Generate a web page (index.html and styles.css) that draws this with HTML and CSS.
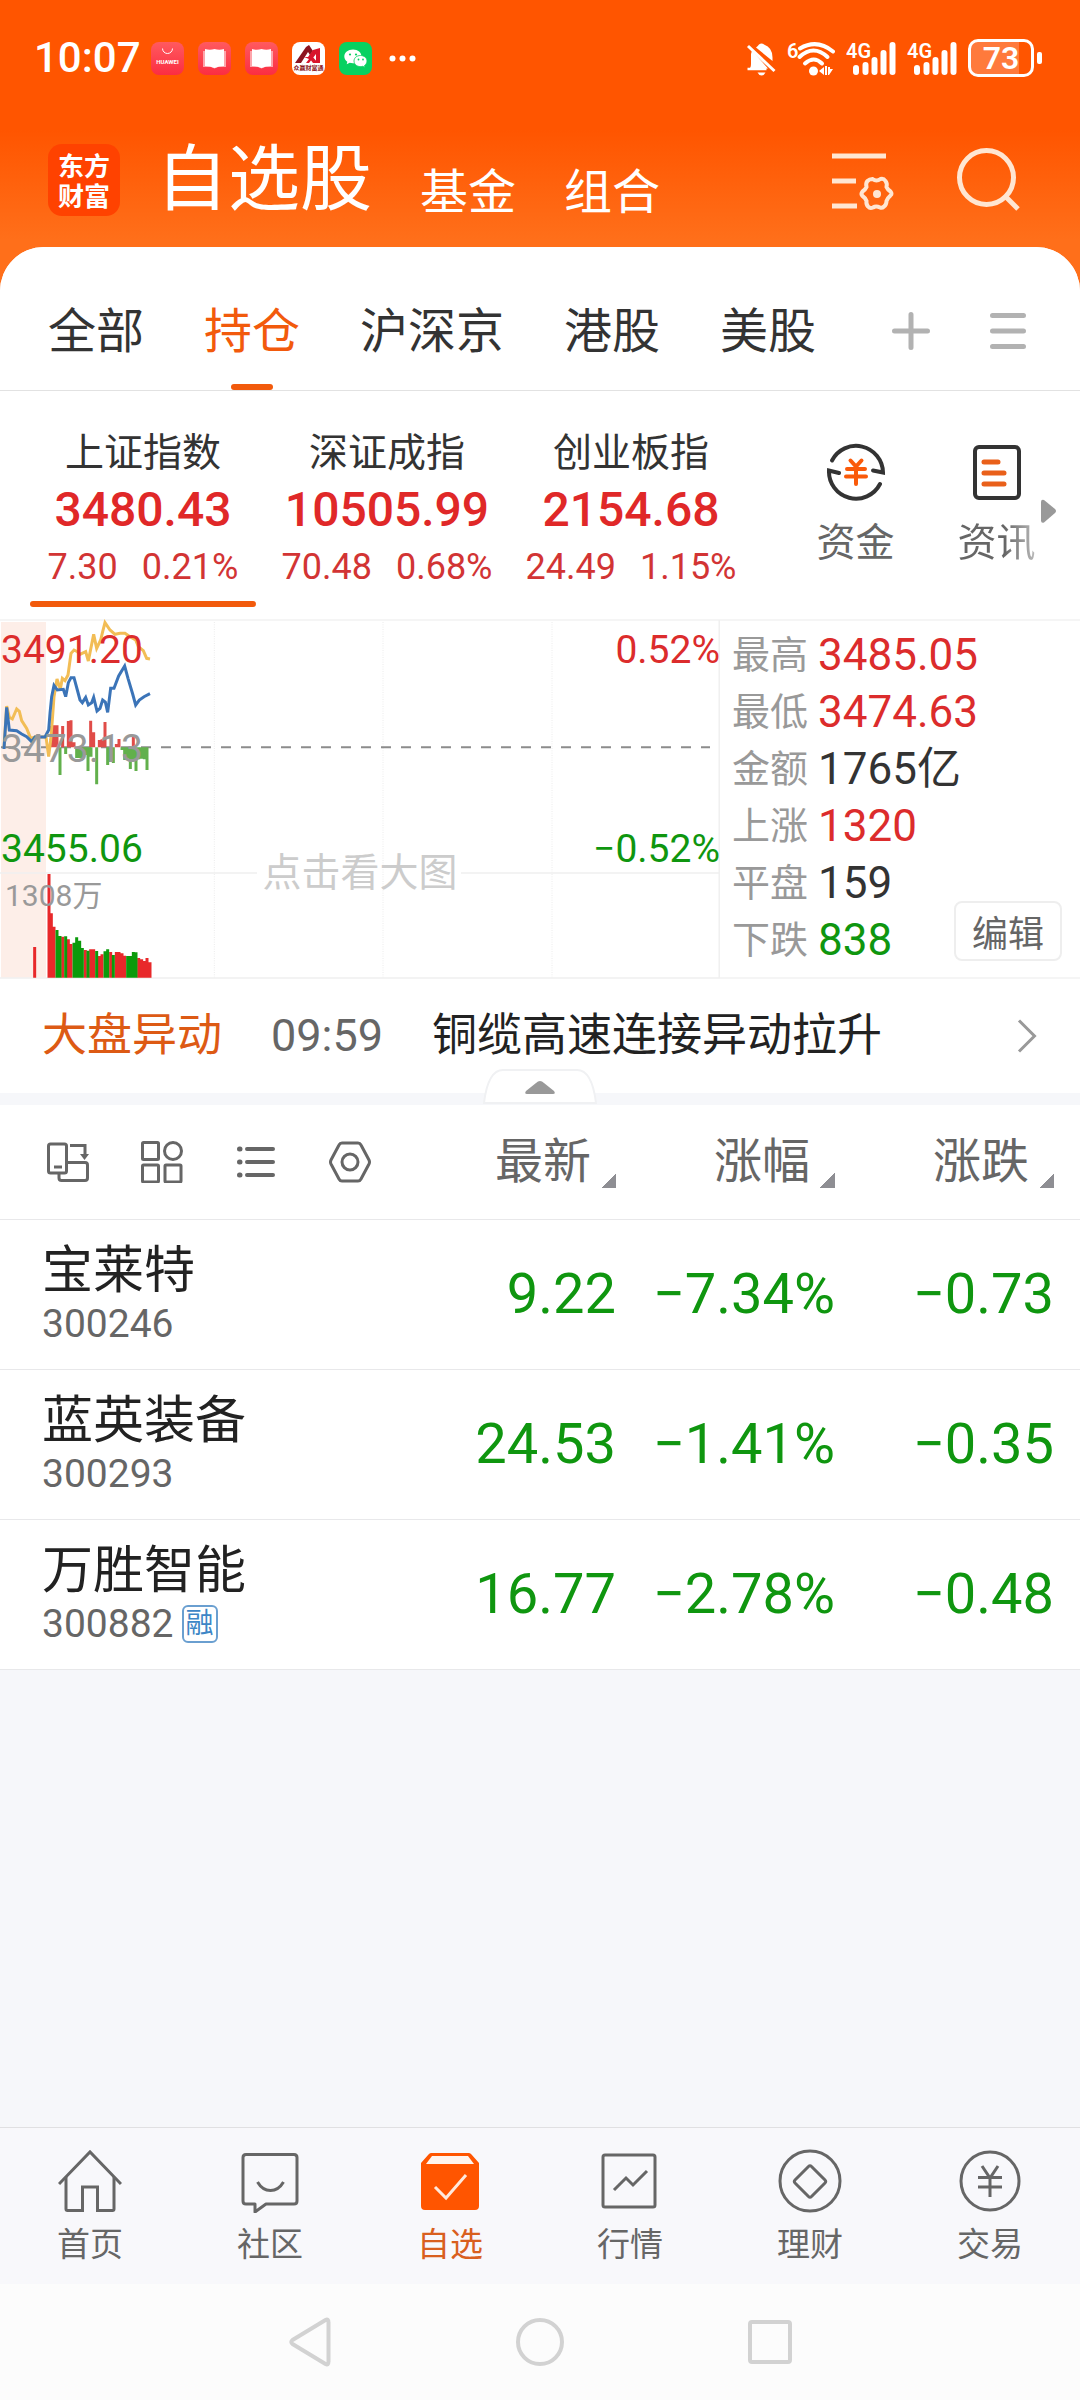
FILE: index.html
```html
<!DOCTYPE html>
<html lang="zh-CN">
<head>
<meta charset="utf-8">
<meta name="viewport" content="width=device-width, initial-scale=1">
<title>自选股</title>
<link rel="stylesheet" href="styles.css">
</head>
<body>
<div class="app">
  <div class="status">
    <span class="clock">10:07</span>
    <div class="notices">
      <svg class="notice" viewBox="0 0 33 33"><defs><linearGradient id="rd" x2="0" y2="1"><stop offset="0" stop-color="#ff5a5f"/><stop offset="1" stop-color="#fb2d42"/></linearGradient></defs><rect width="33" height="33" rx="8" fill="url(#rd)"/><path d="M11.500 6.500a5 5 0 0 0 10 0" fill="none" stroke="#fff" stroke-width="1"/><text x="16.500" y="21.500" class="huawei">HUAWEI</text></svg>
      <svg class="notice" viewBox="0 0 33 33"><rect width="33" height="33" rx="8" fill="url(#rd)"/><path d="M5 9h23v16H20l-3.500 1.500L13 25H5z" fill="#fda5ab"/><path d="M7 7q5 1.500 9.500 0 5 1.500 9.500 0v17q-5 0-9.500 2-4.500-2-9.500-2z" fill="#fff"/></svg>
      <svg class="notice" viewBox="0 0 33 33"><rect width="33" height="33" rx="8" fill="url(#rd)"/><path d="M5 9h23v16H20l-3.500 1.500L13 25H5z" fill="#fda5ab"/><path d="M7 7q5 1.500 9.500 0 5 1.500 9.500 0v17q-5 0-9.500 2-4.500-2-9.500-2z" fill="#fff"/></svg>
      <svg class="notice" viewBox="0 0 33 33"><rect width="33" height="33" rx="8" fill="#fff"/><path d="M3 21L14 5l3-2 4 6-3 4-2-3-7 11z" fill="#8c1420"/><path d="M12 15h4l5-7 7-2v15h-4v-9l-7 9h-3l3-4zM20 14l6 7h-5l-3-4z" fill="#d8142c"/><text x="16.500" y="28" class="broker">众赢财富通</text></svg>
      <svg class="notice" viewBox="0 0 33 33"><rect width="33" height="33" rx="8" fill="#07d160"/><path d="M14 7.500c-5 0-8.700 3-8.700 7 0 2.300 1.200 4 3 5.300l-.6 2.500 3-1.500c1 .3 2 .5 3.300.5 5 0 8.500-3 8.500-6.800s-3.500-7-8.500-7z" fill="#fff"/><path d="M21.500 13.500c-3.700 0-6.500 2.300-6.500 5.500s2.800 5.600 6.500 5.600c.8 0 1.600 0 2.300-.3l2.200 1.200-.5-2c1.500-1 2.500-2.700 2.500-4.500 0-3.200-2.900-5.500-6.500-5.500z" fill="#fff" stroke="#07d160" stroke-width=".8"/><circle cx="11" cy="12.500" r="1.100" fill="#07d160"/><circle cx="17" cy="12.500" r="1.100" fill="#07d160"/><circle cx="19.500" cy="17.500" r=".9" fill="#07d160"/><circle cx="24" cy="17.500" r=".9" fill="#07d160"/></svg>
    </div>
    <svg class="more" viewBox="0 0 27 7" fill="#fff"><circle cx="3.500" cy="3.500" r="3"/><circle cx="13.500" cy="3.500" r="3"/><circle cx="23.500" cy="3.500" r="3"/></svg>
    <div class="signals">
      <svg width="30" height="36" viewBox="0 0 30 36"><path d="M3.500 28.500q1.500-1 1.500-5V14l1-3.500L22 28.500z" fill="#fff"/><path d="M10 7.500q2-1.500 3-3 2.500-2 5 0 8.500 3 8.500 13V21z" fill="#fff"/><path d="M2 6l26.500 25" stroke="#fff" stroke-width="3"/><path d="M1.500 29h19" stroke="#fff" stroke-width="2.500"/><path d="M11.500 32.500h8q-1.500 3-4 3t-4-3z" fill="#fff"/></svg>
      <svg width="48" height="38" viewBox="0 0 48 38"><g fill="none" stroke="#fff" stroke-width="4" stroke-linecap="round"><path d="M13 9.500q17-10 33 3"/><path d="M12.500 18q14-13 28 0"/><path d="M18 24.500q9-8 17 0"/></g><circle cx="26.500" cy="32" r="4.500" fill="#fff"/><path d="M32 32l5-4v8zM41 28h2v2h3l-4 6h-1zM38 27h2v9h-2z" fill="#fff"/><text x="0" y="19" class="sig-text">6</text></svg>
      <svg width="50" height="38" viewBox="0 0 50 38"><g stroke="#fff" stroke-width="6" stroke-linecap="round"><path d="M10 29v4M19.500 26v7M28.500 21v12M37.500 14v19M46.500 6v27"/></g><text x="0" y="19" class="sig-text">4G</text></svg>
      <svg width="50" height="38" viewBox="0 0 50 38"><g stroke="#fff" stroke-width="6" stroke-linecap="round"><path d="M10 29v4M19.500 26v7M28.500 21v12M37.500 14v19M46.500 6v27"/></g><text x="0" y="19" class="sig-text">4G</text></svg>
      <div class="battery"><span>73</span></div>
    </div>
  </div>

  <header class="header">
    <div class="logo"><span>东方</span><span>财富</span></div>
    <nav class="sections">
      <h1 class="section-title">自选股</h1>
      <a class="section" href="#">基金</a>
      <a class="section" href="#">组合</a>
    </nav>
    <div class="header-tools">
      <button class="icon-btn" aria-label="设置"><svg width="64" height="64" viewBox="0 0 64 64" fill="none" stroke="#ffe6d2" stroke-width="5"><path d="M1 8h54M1 33h24M1 58h25"/><path d="M41.500 31q4 3 8 0 3-1 5 2 2 2.500 1 6 1 2.500 4 4.500 2 2.500 0 4-3.500 3-4 5.500 0 4-2.500 5.500-2 2-4 1-4-2-7 0-3 1.500-5-1-2-2-1.500-5.500-1-3-4-5-2-2 0-4.500 3-2 4-4.500-1-4 1-6t5-2z" stroke-width="4"/><circle cx="46" cy="46" r="4" fill="#ffe6d2" stroke="none"/></svg></button>
      <button class="icon-btn" aria-label="搜索"><svg width="64" height="64" viewBox="0 0 64 64" fill="none" stroke="#ffe6d2"><circle cx="29.500" cy="29.500" r="27" stroke-width="5"/><path d="M48 48l13 13" stroke-width="5"/></svg></button>
    </div>
  </header>

  <main class="sheet">
    <nav class="tabs">
      <button class="tab">全部</button>
      <button class="tab tab-on">持仓</button>
      <button class="tab">沪深京</button>
      <button class="tab">港股</button>
      <button class="tab">美股</button>
      <div class="tab-tools">
        <button class="icon-btn" aria-label="添加"><svg width="38" height="38" viewBox="0 0 38 38" stroke="#b2b2b2" stroke-width="5" stroke-linecap="round"><path d="M19 2.500v33M2.500 19h33"/></svg></button>
        <button class="icon-btn" aria-label="菜单"><svg width="36" height="38" viewBox="0 0 36 38" stroke="#b2b2b2" stroke-width="5" stroke-linecap="round"><path d="M2.500 3.500h31M2.500 19h31M2.500 34.500h31"/></svg></button>
      </div>
    </nav>

    <section class="overview">
      <div class="indices">
        <button class="index index-on"><span class="index-name">上证指数</span><span class="index-value">3480.43</span><span class="index-change"><span>7.30</span><span>0.21%</span></span></button>
        <button class="index"><span class="index-name">深证成指</span><span class="index-value">10505.99</span><span class="index-change"><span>70.48</span><span>0.68%</span></span></button>
        <button class="index"><span class="index-name">创业板指</span><span class="index-value">2154.68</span><span class="index-change"><span>24.49</span><span>1.15%</span></span></button>
      </div>
      <div class="shortcuts">
        <button class="shortcut"><svg width="60" height="60" viewBox="0 0 60 60" fill="none" stroke-linecap="round"><g stroke="#333" stroke-width="4"><path d="M6 18.500A27 27 0 0 1 57 30.500L47 28.500"/><path d="M54 42A27 27 0 0 1 3 28.500L13 31"/></g><path d="M24.500 18.500l5.500 6 5.500-6M21 27h18M20 34.500h20M30 25v17" stroke="#fa5a0a" stroke-width="4"/></svg><span>资金</span></button>
        <button class="shortcut"><svg width="60" height="60" viewBox="0 0 60 60" fill="none"><rect x="8" y="5" width="44" height="51" rx="4" stroke="#333" stroke-width="4"/><path d="M17 20h14M17 31h20M17 42h20" stroke="#e9601a" stroke-width="5" stroke-linecap="round"/></svg><span class="fade">资讯</span></button>
        <svg class="scroll-hint" width="15" height="24" viewBox="0 0 15 24"><path d="M0 3q0-3 3-2l11 9q2 2 0 4L3 23.500q-3 1-3-2z" fill="#999"/></svg>
      </div>
    </section>

    <section class="market">
      <div class="chart">
        <svg class="plot" viewBox="0 57 2160 1080">
          <rect x="3" y="66" width="135" height="1067" fill="#fdeee8"/>
          <g stroke="#ececec" stroke-width="3" stroke-dasharray="3 4"><path d="M643 66V1133M1149 66V1133M1656 66V1133"/></g>
          <path d="M0 819H771M1383 819H2160M0 1134H2160M2158 60V1134" stroke="#f0f0f0" stroke-width="5" fill="none"/>
          <path d="M3 442H2130" stroke="#8c8c8c" stroke-width="6" stroke-dasharray="30 30"/>
          <g stroke-width="9" fill="none">
            <path stroke="#e04c48" d="M155 442V378M163 442V376M171 442V376M188 442V378M205 442V363M213 442V361M222 442V427M272 442V362M281 442V397M298 442V420M306 442V418M315 442V366M349 442V432M357 442V417M400 442V410"/>
            <path stroke="#62b04c" d="M180 442V525M197 442V462M230 442V474M239 442V474M247 442V480M256 442V465M264 442V513M273 442V470M290 442V553M323 442V495M332 442V486M340 442V489M366 442V450M374 442V480M383 442V476M391 442V507M400 442V484M408 442V513M416 442V478M425 442V476M433 442V478M441 442V510"/>
            <path stroke="#e8282a" d="M104 1133V1041M147 1133V822M154 1133V940M162 1133V980M188 1133V1010M205 1133V1018M213 1133V1032M256 1133V1050M272 1133V1048M281 1133V1048M298 1133V1068M306 1133V1063M332 1133V1056M349 1133V1056M357 1133V1056M366 1133V1060M374 1133V1067M416 1133V1074M425 1133V1078M433 1133V1083M441 1133V1074M450 1133V1087"/>
            <path stroke="#0b9a0b" d="M171 1133V990M180 1133V1008M197 1133V1009M222 1133V1028M230 1133V1012M239 1133V1022M247 1133V1044M264 1133V1052M290 1133V1053M315 1133V1054M323 1133V1048M340 1133V1065M383 1133V1068M391 1133V1068M400 1133V1056M408 1133V1057"/>
          </g>
          <polyline fill="none" stroke="#f2bd55" stroke-width="9" points="12,443 20,318 28,352 37,357 50,327 58,334 65,362 80,385 92,415 105,411 138,411 146,470 152,420 157,360 162,290 171,237 181,268 187,235 195,242 204,225 213,160 222,150 232,155 240,163 257,155 265,183 281,103 290,145 302,120 308,95 315,68 330,90 345,103 360,100 375,100 390,110 407,120 415,140 430,152 440,175 450,177"/>
          <polyline fill="none" stroke="#3b74b8" stroke-width="9" points="12,447 20,322 28,390 50,392 65,402 80,410 95,425 105,411 135,411 146,390 150,340 155,290 162,256 172,270 190,268 197,290 205,248 213,233 222,233 232,270 240,300 247,308 257,292 265,315 275,308 281,292 291,333 300,325 308,300 316,306 323,337 332,265 342,265 356,228 374,198 384,235 398,282 407,315 418,300 432,290 450,281"/>
        </svg>
        <span class="mark mark-high up">3491.20</span>
        <span class="mark mark-mid">3473.13</span>
        <span class="mark mark-low down">3455.06</span>
        <span class="mark mark-high mark-right up">0.52%</span>
        <span class="mark mark-low mark-right down">−0.52%</span>
        <span class="mark mark-volume">1308万</span>
        <a class="enlarge" href="#">点击看大图</a>
      </div>
      <div class="facts">
        <dl class="fact-list">
          <div class="fact"><dt>最高</dt><dd class="up">3485.05</dd></div>
          <div class="fact"><dt>最低</dt><dd class="up">3474.63</dd></div>
          <div class="fact"><dt>金额</dt><dd>1765亿</dd></div>
          <div class="fact"><dt>上涨</dt><dd class="up">1320</dd></div>
          <div class="fact"><dt>平盘</dt><dd>159</dd></div>
          <div class="fact"><dt>下跌</dt><dd class="down">838</dd></div>
        </dl>
        <button class="edit">编辑</button>
      </div>
    </section>

    <a class="news" href="#">
      <span class="news-tag">大盘异动</span>
      <span class="news-time">09:59</span>
      <span class="news-title">铜缆高速连接异动拉升</span>
      <svg width="20" height="34" viewBox="0 0 20 34"><path d="M2 1.500L17.500 17 2 32.500" fill="none" stroke="#999" stroke-width="3"/></svg>
    </a>
    <div class="band">
      <button class="fold" aria-label="收起"><svg width="114" height="36" viewBox="0 0 114 36"><path d="M1 34Q5 1 20 1H94Q109 1 113 34z" fill="#fff" stroke="#f0f1f3" stroke-width="2"/><path d="M57 12q2 0 4 2l10 8q2 3-1 3H44q-3 0-1-3l10-8q2-2 4-2z" fill="#999"/></svg></button>
    </div>

    <table class="stocks">
      <colgroup><col><col class="col-num"><col class="col-num"><col class="col-last"></colgroup>
      <thead>
        <tr>
          <th>
            <div class="views">
              <button class="icon-btn" aria-label="横屏"><svg width="42" height="42" viewBox="0 0 42 42" fill="none" stroke="#666" stroke-width="3"><rect x="1.500" y="3" width="18" height="29" rx="2"/><path d="M7 26h8"/><path d="M12 33v4q0 2.500 2.500 2.500H38q2.500 0 2.500-2.500V24q0-2.500-2.500-2.500H20"/><path d="M23 4.500h15V14"/><path d="M33 13h9l-4.500 6z" fill="#666" stroke="none"/></svg></button>
              <button class="icon-btn" aria-label="宫格"><svg width="42" height="42" viewBox="0 0 42 42" fill="none" stroke="#666" stroke-width="3"><rect x="1.500" y="1.500" width="16" height="17" rx="1"/><circle cx="32" cy="10" r="8.500"/><rect x="1.500" y="24" width="16" height="17" rx="1"/><rect x="24" y="24" width="16" height="17" rx="1"/></svg></button>
              <button class="icon-btn" aria-label="列表"><svg width="42" height="42" viewBox="0 0 42 42" stroke="#666" stroke-width="4" stroke-linecap="round"><path d="M12 8h26M12 21h26M12 34h26"/><path d="M4.500 8h.5M4.500 21h.5M4.500 34h.5" stroke-width="5"/></svg></button>
              <button class="icon-btn" aria-label="设置"><svg width="42" height="42" viewBox="0 0 42 42" fill="none" stroke="#666" stroke-width="3"><path d="M13 2h16q2 0 3 2l8 15q1 2 0 4l-8 15q-1 2-3 2H13q-2 0-3-2L2 23q-1-2 0-4l8-15q1-2 3-2z"/><circle cx="21" cy="21" r="8"/></svg></button>
            </div>
          </th>
          <th><button class="sort">最新</button></th>
          <th><button class="sort">涨幅</button></th>
          <th><button class="sort">涨跌</button></th>
        </tr>
      </thead>
      <tbody>
        <tr><td><div class="name">宝莱特</div><div class="code">300246</div></td><td>9.22</td><td>−7.34%</td><td>−0.73</td></tr>
        <tr><td><div class="name">蓝英装备</div><div class="code">300293</div></td><td>24.53</td><td>−1.41%</td><td>−0.35</td></tr>
        <tr><td><div class="name">万胜智能</div><div class="code">300882<span class="badge">融</span></div></td><td>16.77</td><td>−2.78%</td><td>−0.48</td></tr>
      </tbody>
    </table>
  </main>

  <nav class="dock">
    <a class="dock-item" href="#"><svg width="64" height="64" viewBox="0 0 64 64" fill="none" stroke="#666" stroke-width="3"><path d="M1 35L32 3l31 32"/><path d="M8 28v32q0 1.500 1.500 1.500H24.500V38H39.500V61.500H54.500q1.500 0 1.500-1.500V28"/></svg><span>首页</span></a>
    <a class="dock-item" href="#"><svg width="64" height="64" viewBox="0 0 64 64" fill="none" stroke="#666" stroke-width="3"><path d="M8 5.500H56q3 0 3 3V52q0 3-3 3H28L17 63V55H8q-3 0-3-3V8.500q0-3 3-3z" stroke-linejoin="round"/><path d="M19.500 33q5 8.500 13 8.500T45.500 33"/></svg><span>社区</span></a>
    <a class="dock-item dock-on" href="#"><svg width="64" height="64" viewBox="0 0 64 64"><path d="M13 4H51q1.500 0 2.500 1.500L61 14V57q0 4-4 4H7q-4 0-4-4V14L10.500 5.500Q11.500 4 13 4z" fill="#ff5500"/><path d="M14 7H50l6 8H8z" fill="#fff5ee"/><path d="M17 38l11 11 20-23" fill="none" stroke="#ffe9dc" stroke-width="3"/></svg><span>自选</span></a>
    <a class="dock-item" href="#"><svg width="64" height="64" viewBox="0 0 64 64" fill="none" stroke="#666" stroke-width="3"><rect x="5" y="6" width="52" height="52" rx="2"/><path d="M16 41l12-12 7 7 14-14"/></svg><span>行情</span></a>
    <a class="dock-item" href="#"><svg width="64" height="64" viewBox="0 0 64 64" fill="none" stroke="#666" stroke-width="3"><circle cx="32" cy="32" r="30"/><path d="M30.500 17.500q1.500-1.500 3 0L47 31q1.500 1.500 0 3L33.500 47.500q-1.500 1.500-3 0L17 34q-1.500-1.500 0-3z"/></svg><span>理财</span></a>
    <a class="dock-item" href="#"><svg width="64" height="64" viewBox="0 0 64 64" fill="none" stroke="#666" stroke-width="3"><circle cx="32" cy="32" r="29"/><path d="M24 17l8 12 8-12M32 29v19M20 28.500h24M20 38h24"/></svg><span>交易</span></a>
  </nav>
  <div class="sysnav">
    <button class="icon-btn" aria-label="返回"><svg width="48" height="50" viewBox="0 0 48 50" fill="none" stroke="#d2d2d2" stroke-width="4" stroke-linejoin="round"><path d="M42.500 5.500q0-4-3-2.500L6.500 23q-2.500 2 0 4l33 20q3 1.500 3-2.500z"/></svg></button>
    <button class="icon-btn" aria-label="主页"><svg width="50" height="50" viewBox="0 0 50 50" fill="none" stroke="#d2d2d2" stroke-width="4"><circle cx="25" cy="25" r="22"/></svg></button>
    <button class="icon-btn" aria-label="多任务"><svg width="48" height="50" viewBox="0 0 48 50" fill="none" stroke="#d2d2d2" stroke-width="4"><rect x="4" y="5" width="40" height="40" rx="2"/></svg></button>
  </div>
</div>
</body>
</html>
```

FILE: styles.css
```css
* {
  box-sizing: border-box;
}

body {
  margin: 0;
  font-family: Roboto, "Noto Sans CJK SC", sans-serif;
  color: #333;
  background: #f6f7fa;
}

button {
  margin: 0;
  padding: 0;
  border: 0;
  background: none;
  font: inherit;
  color: inherit;
}

a {
  color: inherit;
  text-decoration: none;
}

svg {
  display: block;
  flex: none;
}

.app {
  display: flex;
  flex-direction: column;
  min-height: 100vh;
  background: linear-gradient(#ff5500 130px, #ff6f1a 240px) no-repeat;
  background-size: 100% 320px;
}

.icon-btn {
  display: flex;
}

.up {
  color: #dc2c2c;
}

.down {
  color: #0f960f;
}

/* status bar */
.status {
  display: flex;
  align-items: center;
  height: 116px;
  padding: 0 38px 0 34px;
  color: #fff;
}

.clock {
  width: 117px;
  font-size: 42px;
  font-weight: 500;
  line-height: 52px;
}

.notices {
  display: flex;
  gap: 14px;
}

.notice {
  width: 33px;
  height: 33px;
}

.huawei {
  font-size: 6px;
  font-weight: 700;
  fill: #fff;
  text-anchor: middle;
}

.broker {
  font-size: 6px;
  font-weight: 700;
  fill: #8c1420;
  text-anchor: middle;
}

.more {
  width: 27px;
  margin-left: 17px;
}

.signals {
  display: flex;
  align-items: center;
  gap: 11px;
  margin-left: auto;
}

.sig-text {
  font-size: 20px;
  font-weight: 600;
  fill: #fff;
}

.battery {
  position: relative;
  width: 66px;
  height: 38px;
  margin-right: 8px;
  border: 3px solid #fff;
  border-radius: 10px;
  background: linear-gradient(90deg, #ff7a3c 80%, transparent 80%);
  font-size: 32px;
  font-weight: 600;
  line-height: 32px;
  text-align: center;
}

.battery::after {
  content: "";
  position: absolute;
  top: 10px;
  right: -11px;
  width: 5px;
  height: 12px;
  border-radius: 2px;
  background: #fff;
}

/* header */
.header {
  display: flex;
  align-items: center;
  height: 131px;
  padding: 0 59px 4px 48px;
  color: #fff;
}

.logo {
  display: grid;
  align-content: center;
  justify-items: center;
  width: 72px;
  height: 72px;
  border-radius: 14px;
  background: #ff4200;
  font-family: "Noto Sans CJK SC", sans-serif;
  font-size: 26px;
  font-weight: 700;
  line-height: 30px;
}

.sections {
  display: flex;
  align-items: flex-end;
  gap: 48px;
  margin-left: 36px;
}

.section-title {
  margin: 0;
  font-size: 72px;
  font-weight: 400;
  line-height: 80px;
}

.section {
  font-size: 48px;
  line-height: 54px;
}

.header-tools {
  display: flex;
  gap: 62px;
  margin-left: auto;
}

/* sheet */
.sheet {
  flex: 1;
  border-radius: 44px 44px 0 0;
  background: #f6f7fa;
  overflow: hidden;
}

.tabs,
.overview,
.market,
.news,
.stocks {
  background: #fff;
}

.tabs {
  display: flex;
  align-items: stretch;
  gap: 60px;
  height: 144px;
  padding: 0 54px 0 48px;
  border-bottom: 1px solid #e2e2e2;
}

.tab {
  position: relative;
  padding-top: 27px;
  font-size: 48px;
  line-height: 60px;
}

.tab-on {
  color: #f25a0c;
}

.tab-on::after {
  content: "";
  position: absolute;
  bottom: 0;
  left: calc(50% - 21px);
  width: 42px;
  height: 6px;
  border-radius: 3px;
  background: #f25a0c;
}

.tab-tools {
  display: flex;
  align-items: center;
  gap: 60px;
  margin-left: auto;
  padding-top: 25px;
}

.overview {
  display: flex;
  gap: 41px;
  height: 228px;
  padding: 0 13px 0 30px;
}

.indices {
  display: grid;
  grid-template-columns: repeat(3, 1fr);
  gap: 18px;
  flex: 1;
}

.index {
  position: relative;
  display: flex;
  flex-direction: column;
  align-items: center;
  padding-top: 36px;
}

.index-on::after {
  content: "";
  position: absolute;
  right: 0;
  bottom: 12px;
  left: 0;
  height: 6px;
  border-radius: 3px;
  background: #f25a0c;
}

.index-name {
  font-size: 39px;
  line-height: 52px;
}

.index-value {
  color: #e02828;
  font-size: 48px;
  font-weight: 500;
  line-height: 62px;
}

.index-change {
  display: flex;
  gap: 24px;
  color: #d23434;
  font-size: 36px;
  line-height: 52px;
}

.shortcuts {
  position: relative;
  display: grid;
  grid-template-columns: 1fr 1fr;
  width: 282px;
}

.shortcut {
  display: flex;
  flex-direction: column;
  align-items: center;
  gap: 17px;
  padding-top: 51px;
  color: #666;
  font-size: 39px;
  line-height: 48px;
}

.fade {
  background: linear-gradient(90deg, #666 60%, #bbb);
  background-clip: text;
  color: transparent;
}

.scroll-hint {
  position: absolute;
  top: 108px;
  right: 11px;
}

/* market panel */
.market {
  display: grid;
  grid-template-columns: 2fr 1fr;
  border-top: 2px solid #f5f5f5;
}

.chart {
  position: relative;
  margin-top: -2px;
}

.plot {
  width: 100%;
}

.mark {
  position: absolute;
  left: 1px;
  font-size: 39px;
  line-height: 40px;
}

.mark-high {
  top: 11px;
}

.mark-mid {
  top: 110px;
  color: #999;
}

.mark-low {
  top: 210px;
}

.mark-right {
  right: 0;
  left: auto;
}

.mark-volume {
  top: 257px;
  left: 5px;
  color: #999;
  font-size: 30px;
}

.enlarge {
  position: absolute;
  top: 230px;
  right: 0;
  left: 0;
  color: #ccc;
  font-size: 39px;
  line-height: 48px;
  text-align: center;
}

.facts {
  position: relative;
  padding: 6px 12px 0;
  border-bottom: 2px solid #f5f5f5;
}

.fact-list {
  margin: 0;
}

.fact {
  display: flex;
  gap: 10px;
  line-height: 57px;
}

.fact dt {
  color: #999;
  font-size: 38px;
}

.fact dd {
  margin: 0;
  font-size: 44px;
}

.edit {
  position: absolute;
  right: 18px;
  bottom: 16px;
  width: 108px;
  height: 60px;
  border: 2px solid #eee;
  border-radius: 8px;
  background: #fff;
  color: #666;
  font-size: 36px;
}

/* news */
.news {
  display: flex;
  align-items: center;
  height: 114px;
  padding: 0 43px 0 42px;
  font-size: 45px;
  line-height: 60px;
}

.news-tag {
  color: #dd5a14;
}

.news-time {
  margin-left: 49px;
  color: #666;
}

.news-title {
  flex: 1;
  margin-left: 49px;
  color: #222;
}

.band {
  position: relative;
  height: 12px;
  background: #f6f7fa;
}

.fold {
  position: absolute;
  bottom: 0;
  left: calc(50% - 57px);
}

/* watch list */
.stocks {
  width: 100%;
  border-collapse: collapse;
  table-layout: fixed;
}

.col-num {
  width: 219px;
}

.col-last {
  width: 245px;
}

.stocks th,
.stocks td {
  padding: 0;
  border-bottom: 1px solid #e8e8ea;
  text-align: right;
}

.stocks th {
  height: 114px;
  color: #666;
  font-weight: 400;
}

.stocks td {
  height: 150px;
  color: #0f960f;
  font-size: 56px;
}

.stocks tr > :first-child {
  padding-left: 42px;
  text-align: left;
}

.stocks tr > :last-child {
  padding-right: 26px;
}

.views {
  display: flex;
  gap: 52px;
  padding-left: 5px;
}

.sort {
  display: inline-flex;
  align-items: flex-end;
  gap: 10px;
  font-size: 48px;
  line-height: 52px;
}

.sort::after {
  content: "";
  width: 15px;
  height: 15px;
  background: linear-gradient(135deg, transparent 50%, #8e8e93 50%);
}

.name {
  color: #222;
  font-size: 51px;
  line-height: 60px;
}

.code {
  display: flex;
  align-items: center;
  gap: 8px;
  color: #666;
  font-size: 39px;
  line-height: 46px;
}

.badge {
  width: 36px;
  height: 38px;
  border: 2px solid #6a9fd0;
  border-radius: 6px;
  color: #3d86c6;
  font-size: 28px;
  line-height: 34px;
  text-align: center;
}

/* bottom bars */
.dock {
  display: grid;
  grid-template-columns: repeat(6, 1fr);
  height: 157px;
  border-top: 1px solid #e0e0e2;
  background: #f8f8fb;
}

.dock-item {
  display: flex;
  flex-direction: column;
  align-items: center;
  gap: 12px;
  padding-top: 21px;
  color: #666;
  font-size: 33px;
  line-height: 40px;
}

.dock-on {
  color: #d95f1e;
}

.sysnav {
  display: flex;
  align-items: center;
  justify-content: center;
  gap: 181px;
  height: 116px;
  background: #fcfcfc;
}
```
